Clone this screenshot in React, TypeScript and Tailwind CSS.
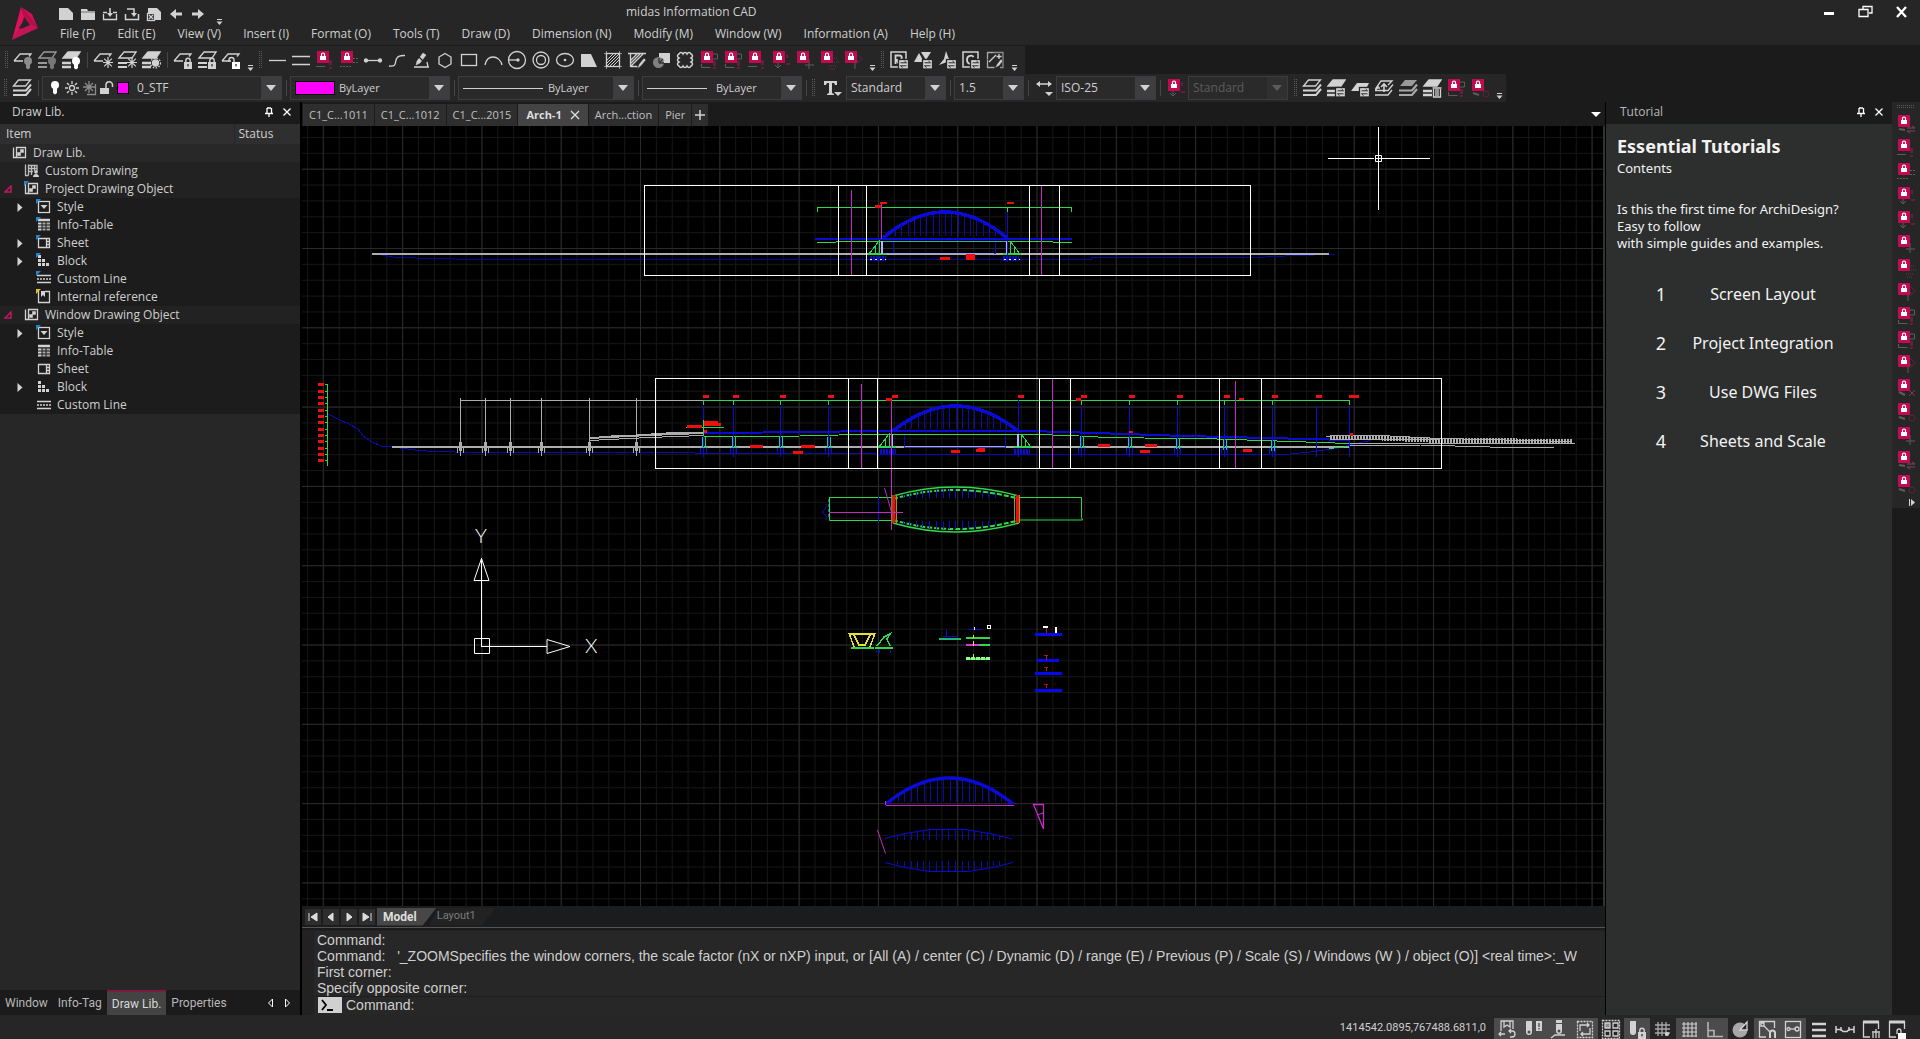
import React from 'react';

type IconProps = { children: React.ReactNode; size?: number };

const LIGHT = '#d2d2d2';

const Icon = ({ children, size = 20 }: IconProps) => (
  <svg width={size} height={size} viewBox={`0 0 ${size} ${size}`} fill="none" stroke={LIGHT} strokeWidth="1.3" className="shrink-0">
    {children}
  </svg>
);

const PadLock = ({ x = 12, y = 10, open = false }: { x?: number; y?: number; open?: boolean }) => (
  <g transform={`translate(${x} ${y})`}>
    <rect x="0" y="4" width="8" height="7" fill={open ? '#ffffff' : LIGHT} stroke="none" />
    <path d={open ? 'M2 4V2a2.300 2.300 0 0 0-5 0v2' : 'M1.8 4V2.4a2.2 2.2 0 0 1 4.4 0V4'} strokeWidth="1.4" />
    <rect x="3.4" y="6" width="1.2" height="2.4" fill="#262626" stroke="none" />
  </g>
);

const Bulb = ({ x = 11, y = 7, color = LIGHT }: { x?: number; y?: number; color?: string }) => (
  <g transform={`translate(${x} ${y})`} fill={color} stroke="none">
    <circle cx="4" cy="4" r="4" />
    <path d="M2 6h4v5l-2 1.5L2 11z" />
  </g>
);

const Snow = ({ x = 10, y = 7 }: { x?: number; y?: number }) => (
  <path transform={`translate(${x} ${y})`} d="M5 0v11M0 5.5h10M1.2 1.7l7.6 7.6M8.8 1.7L1.2 9.3" strokeWidth="1.2" />
);

const Swap = () => (
  <g>
    <rect x="9.500" y="9.500" width="10" height="9.500" fill={LIGHT} stroke="#262626" />
    <path d="M11.500 12.800h6l-2-1.800M17.500 15.800h-6l2 1.800" stroke="#262626" strokeWidth="1" />
  </g>
);

const onePlane = <path d="M1 11L7 4h11l-2 2.500M1 11h9" />;
const twoPlanes = (
  <>
    <path d="M2 8l5-6h12l-4 6z" />
    <path d="M1 13h9M1 17h9" strokeWidth="2" />
  </>
);
const solidPlanes = (
  <>
    <path d="M2 8l5-6h12l-4 6z" fill={LIGHT} />
    <path d="M1 13h9M1 17h9" strokeWidth="2.4" />
  </>
);

const layerStack = (
  <>
    <path d="M1.500 8l5-6h12l-5 6z" />
    <path d="M1 12.500h13l5-6M1 17h13l5-6" strokeWidth="2" />
  </>
);

const tools: Record<string, React.ReactNode> = {
  off: <>{onePlane}<Bulb color="#8c8c8c" /></>,
  isolate: <g stroke="#9a9a9a">{twoPlanes}<Bulb color="#777777" /></g>,
  allOn: <>{solidPlanes}<Bulb color="#ffffff" /></>,
  freeze: <>{onePlane}<Snow /></>,
  freezeSome: <>{twoPlanes}<Snow /></>,
  thaw: <>{solidPlanes}<circle cx="14.500" cy="13" r="3" fill={LIGHT} /><circle cx="14.500" cy="13" r="5" strokeDasharray="1.5 1.5" /></>,
  lock: <>{onePlane}<PadLock x={11} y={8} /></>,
  lockSome: <>{twoPlanes}<PadLock x={11} y={8} /></>,
  unlock: <>{onePlane}<PadLock x={11} y={8} open /></>,
  line: <path d="M2 10.500h17" />,
  dline: <path d="M1 6.500h18M1 14.500h18" />,
  node: <><path d="M3 10.500h14" /><circle cx="3" cy="10.500" r="1.500" fill={LIGHT} /><circle cx="17" cy="10.500" r="1.500" fill={LIGHT} /></>,
  curve: <path d="M2 16c9 1 5-4 8-8 2-3 5-2.500 8-2.500" />,
  sketch: <><path d="M3 17h15M16 12l1 5" /><path d="M5 15l1-4 6-8 3 2-6 8z" fill={LIGHT} strokeWidth="0.5" /><path d="M7 6l7 7" stroke="#262626" /></>,
  hexagon: <path d="M10 3.500l6 3.500v7l-6 3.500L4 14V7z" />,
  rect: <rect x="2.500" y="4.500" width="15" height="11" />,
  arc: <path d="M2 15c1-5 4-8 8-8s8 3 9 8" />,
  circle: <><circle cx="10" cy="10" r="8.500" /><path d="M2 10h10" /><circle cx="11" cy="10" r="1" fill={LIGHT} /></>,
  donut: <><circle cx="10" cy="10" r="8" /><circle cx="10" cy="10" r="4.500" /></>,
  ellipse: <><ellipse cx="10" cy="10" rx="8.500" ry="6.500" /><circle cx="10" cy="10" r="0.700" fill={LIGHT} /></>,
  solid: <path d="M2 4h10l6 13H2z" fill={LIGHT} stroke="none" />,
  hatch: <><rect x="3.500" y="3.500" width="13" height="13" /><path d="M4 10l6-6M4 16L16 4M10 16l6-6M4 13l9-9M7 16l9-9" strokeWidth="1" /><path d="M1 3.500h18M1 16.500h18M3.500 1v18M16.500 1v18" strokeWidth="0.600" /></>,
  hatchEdit: <><path d="M3.500 17V3.500h14M1 3.500h18M4 10l6-6M4 16L16 4M4 13l9-9M3.500 16.500h7" /><path d="M10 19l2-5 5-6 2 2-5 6z" fill={LIGHT} stroke="#262626" strokeWidth="0.600" /></>,
  wipe: <><rect x="8" y="3" width="11" height="10" fill={LIGHT} stroke="none" /><circle cx="7.500" cy="12.500" r="5.500" fill="#808080" stroke="none" /><path d="M8 13V8M8 13h5M9 12l3-3" stroke="#333333" /></>,
  cloud: <path d="M4 4c1-2 3-2 4 0 1-2 3-2 4 0 1-2 3-2 4 0 2 1 2 3 0 4 2 1 2 3 0 4 2 1 2 3 0 4-1 2-3 2-4 0-1 2-3 2-4 0-1 2-3 2-4 0-2-1-2-3 0-4-2-1-2-3 0-4-2-1-2-3 0-4z" strokeWidth="1.500" />,
  redraw: <><path d="M2 2h15v15H2z" strokeWidth="1.500" /><path d="M6.500 14V5.500h4a2 2 0 0 1 0 4.500H7l3 4" strokeWidth="1.800" /><Swap /></>,
  flipTri: <><path d="M1 12l5-9 5 9z" fill={LIGHT} stroke="none" /><path d="M8 2h10l-5 8z" fill={LIGHT} stroke="none" /><Swap /></>,
  spin: <><path d="M9 1l2.500 7L19 15l-9-3-8 3 5-6z" fill={LIGHT} stroke="none" /><Swap /></>,
  copySwap: <><path d="M2 2h15v15H2z" strokeWidth="1.500" /><path d="M12.500 7c-1-2-6.500-2-6.500 2.500S9 14 11 13" strokeWidth="1.800" /><Swap /></>,
  magic: <><path d="M8 2.500h10v15h-3" stroke="#8c8c8c" /><path d="M2.500 9.500v8h7M2.500 9V2.500H8" stroke="#a8a8a8" /><path d="M4 12l7-7M14 4v5M11.500 6.500h5" /><path d="M10 18l2-4 4-5 2 2-4 5z" fill={LIGHT} stroke="#262626" strokeWidth="0.600" /></>,
  layers: layerStack,
  layersSwap: <>{solidPlanes}<Swap /></>,
  planeSwap: <><path d="M1 13l6-8h12l-2 4h-7v4z" fill={LIGHT} stroke="none" /><Swap /></>,
  layersUp: <><path d="M1.500 12l3-4M14 7l4-4H7L2 10h4M1 12.500h13l5-6M1 17h13l4-5" /><path d="M10 14V6M7 9l3-3 3 3" strokeWidth="1.600" /></>,
  layersDim: <><path d="M2 8l5-6h12l-5 6z" fill="#9a9a9a" stroke="none" /><path d="M1 12.500h13l5-6M1 17h13l5-6" strokeWidth="2.200" stroke="#a8a8a8" /></>,
  layersTrash: <>{solidPlanes}<path d="M10.500 10h9M11.500 11v8h7v-8M14 11v7M16 11v7" /></>,
};

const ghosts: Record<string, React.ReactNode> = {
  dash: <><path d="M1 16.500h12M14 8.500h5M14 12.500h5" stroke="#5c5c5c" strokeDasharray="2 1" /></>,
  box: <><path d="M2.500 14v3.500h9" stroke="#5c5c5c" /><path d="M14 4h4.500v5H14" stroke="#5c5c5c" /><path d="M15.500 11v5M15.500 17v2" stroke="#62203f" strokeWidth="3" /></>,
  alert: <><path d="M1 16.500h9" stroke="#5c5c5c" /><path d="M15.500 10v5M15.500 17v2" stroke="#62203f" strokeWidth="3" /></>,
  arrow: <><path d="M7 13v5M4 15l3 3 3-3" stroke="#5c5c5c" /><path d="M16 4v4M15 14h4" stroke="#62203f" strokeWidth="2" /></>,
  plus: <path d="M14 9v10M10 15h9" stroke="#5c5c5c" />,
  dots: <path d="M13 8h6M13 12h7M10 16h8M11 19h6" stroke="#6a3350" strokeDasharray="1 1" />,
  rotate: <><path d="M12 19v-8h3" stroke="#5c5c5c" /><path d="M15 5l4 4-5 5" stroke="#62203f" /></>,
  cross: <><path d="M3 14l6 3" stroke="#5c5c5c" strokeWidth="2" /><path d="M13 12l6 6M19 12l-6 6" stroke="#7c3c5c" /></>,
  swap: <><path d="M3 15l6 1" stroke="#5c5c5c" strokeWidth="2" /><path d="M11 14h8l-3-2M19 17h-8l3 2" stroke="#7c4460" /></>,
  round: <><path d="M3 15l6 2" stroke="#5c5c5c" strokeWidth="2" /><circle cx="16" cy="16" r="3" stroke="#62203f" /></>,
};

const LockedIcon = ({ ghost }: { ghost: string }) => (
  <svg width="20" height="20" viewBox="0 0 20 20" fill="none" className="shrink-0">
    {ghosts[ghost]}
    <rect x="2" y="1" width="12" height="12" fill="#c00b50" />
    <rect x="5" y="6" width="6" height="4" fill="#ffffff" />
    <path d="M6.500 6V4.500a1.500 1.500 0 0 1 3 0V6" stroke="#ffffff" strokeWidth="1.200" />
  </svg>
);

const ToolButton = ({ name }: { name: string }) => (
  <button aria-label={name} className="flex h-6 w-6 shrink-0 items-center justify-center hover:bg-[#3a3a3a]">
    {name.startsWith('locked-') ? <LockedIcon ghost={name.slice(7)} /> : <Icon>{tools[name]}</Icon>}
  </button>
);

const Grip = () => (
  <span className="flex w-2 shrink-0 justify-center">
    <svg width="4" height="18" viewBox="0 0 4 18">
      <path d="M0.500 0v18M2.500 0v18" stroke="#5a5a5a" strokeDasharray="1 1" />
    </svg>
  </span>
);

const Separator = () => (
  <span className="flex w-2 shrink-0 justify-center">
    <span className="h-4 w-px bg-[#454545]" />
  </span>
);

const MoreButton = () => (
  <button aria-label="More tools" className="flex h-6 w-3.5 shrink-0 items-end justify-center">
    <svg width="7" height="7" viewBox="0 0 7 7">
      <path d="M1 0.500h5" stroke={LIGHT} />
      <path d="M0.500 2.500h6L3.500 6z" fill={LIGHT} />
    </svg>
  </button>
);

type ComboProps = {
  label: string;
  value: string;
  width: string;
  text: string;
  disabled?: boolean;
  children?: React.ReactNode;
};

const Combo = ({ label, value, width, text, disabled, children }: ComboProps) => (
  <div className={`relative flex h-6 shrink-0 items-center border border-[#3c3c3e] bg-[#2a2a2b] ${width}`}>
    {children && <div className="pointer-events-none absolute inset-y-0 left-0 flex items-center">{children}</div>}
    <select
      aria-label={label}
      disabled={disabled}
      className={`h-full w-full appearance-none bg-transparent outline-none ${text} ${disabled ? 'text-[#5c5c5c]' : 'text-[#cfcfcf]'}`}
    >
      <option>{value}</option>
    </select>
    <span className={`pointer-events-none absolute inset-y-0 right-0 flex w-5 items-center justify-center ${disabled ? 'bg-[#303031]' : 'bg-[#3e3e41]'}`}>
      <svg width="10" height="6" viewBox="0 0 10 6">
        <path d="M0 0h10L5 6z" fill={disabled ? '#5c5c5c' : LIGHT} />
      </svg>
    </span>
  </div>
);

const menus = ['File (F)', 'Edit (E)', 'View (V)', 'Insert (I)', 'Format (O)', 'Tools (T)', 'Draw (D)', 'Dimension (N)', 'Modify (M)', 'Window (W)', 'Information (A)', 'Help (H)'];

const quickAccess: { label: string; art: React.ReactNode }[] = [
  { label: 'New', art: <path d="M1 2h9l5 5v7H1z" fill={LIGHT} stroke="none" /> },
  { label: 'Open', art: <><path d="M1 3h6l1 2h7v9H1z" fill={LIGHT} stroke="none" /><path d="M1 6h14" stroke="#888888" /></> },
  { label: 'Save', art: <><path d="M1.500 8v5.500h13V8M5 6.500H1M15 6.500h-4" /><path d="M8 2v6" strokeWidth="1.600" /><path d="M5 7h6l-3 4z" fill={LIGHT} stroke="none" /></> },
  { label: 'Save as', art: <><path d="M1.500 8v5.500h13V8M3 3h7v6" strokeWidth="1.500" /><path d="M7 7h6l-3 4z" fill={LIGHT} stroke="none" /></> },
  { label: 'Close', art: <><path d="M2 2h9l4 4v8H2z" fill={LIGHT} stroke="none" /><rect x="1.500" y="7.500" width="7" height="7" fill="#262626" /><path d="M3 9l4 4M7 9l-4 4" /></> },
  { label: 'Undo', art: <path d="M2 8l6-5v3.500h6v3H8V13z" fill={LIGHT} stroke="none" /> },
  { label: 'Redo', art: <path d="M14 8L8 3v3.500H2v3h6V13z" fill={LIGHT} stroke="none" /> },
];

const Header = () => (
  <header className="flex h-[45px] shrink-0 bg-[#262626]">
    <svg width="28" height="36" viewBox="0 0 28 36" className="mt-1 ml-3 shrink-0">
      <path d="M9 3L13 14 7 24 9 30 0 36z" fill="#e0105a" />
      <path d="M9 3L26 24 19 27 12 13z" fill="#b80e49" />
      <path d="M9 3L20 10 26 24z" fill="#cc1152" />
      <path d="M0 36L26 24 18 20 7 25z" fill="#c51358" />
      <path d="M12 13l6 8-9 4z" fill="#262626" />
    </svg>
    <div className="ml-[18px] flex flex-col">
      <div className="flex h-6 items-center pt-1">
        {quickAccess.map((item) => (
          <button key={item.label} aria-label={item.label} className="mr-1.5 flex h-4 w-4 items-center justify-center">
            <Icon size={16}>{item.art}</Icon>
          </button>
        ))}
        <MoreButton />
        <h1 className="-mt-1 ml-[400px] text-xs whitespace-nowrap text-[#cfcfcf]">midas Information CAD</h1>
      </div>
      <nav className="flex h-5 items-center gap-[22px] pl-0.5 text-xs text-[#cfcfcf]">
        {menus.map((menu) => (
          <button key={menu} className="whitespace-nowrap">{menu}</button>
        ))}
      </nav>
    </div>
    <div className="ml-auto flex items-start gap-5 pt-1 pr-[11px] text-white">
      <button aria-label="Minimize"><Icon size={16}><path d="M3 9.500h10" stroke="#fff" strokeWidth="3" /></Icon></button>
      <button aria-label="Restore"><Icon size={16}><path d="M6 5V2.500h9V9H12M2 5.500h9v7H2z" stroke="#fff" /></Icon></button>
      <button aria-label="Close"><Icon size={16}><path d="M4 3l9 10M13 3L4 13" stroke="#fff" strokeWidth="2.300" /></Icon></button>
    </div>
  </header>
);

const drawTools = ['line', 'dline', 'locked-alert', 'locked-dash', 'node', 'curve', 'sketch', 'hexagon', 'rect', 'arc', 'circle', 'donut', 'ellipse', 'solid', 'hatch', 'hatchEdit', 'wipe', 'cloud', 'locked-box', 'locked-box', 'locked-alert', 'locked-arrow', 'locked-plus', 'locked-dots', 'locked-rotate'];

const Toolbars = () => (
  <div className="shrink-0 bg-[#1b1b1b]">
    <div className="flex h-[29px] w-fit items-center border-t border-[#1b1b1b] bg-[#262626] pl-[3px] pr-1">
      <Grip />
      {['off', 'isolate', 'allOn'].map((t) => <ToolButton key={t} name={t} />)}
      <Separator />
      {['freeze', 'freezeSome', 'thaw'].map((t) => <ToolButton key={t} name={t} />)}
      <Separator />
      {['lock', 'lockSome', 'unlock'].map((t) => <ToolButton key={t} name={t} />)}
      <MoreButton />
      <Grip />
      {drawTools.map((t, i) => <ToolButton key={i} name={t} />)}
      <MoreButton />
      <Grip />
      {['redraw', 'flipTri', 'spin', 'copySwap', 'magic'].map((t) => <ToolButton key={t} name={t} />)}
      <MoreButton />
    </div>
    <div className="flex h-7 w-fit items-center bg-[#262626] pl-0.5">
      <Grip />
      <ToolButton name="layers" />
      <Separator />
      <Combo label="Layer" value="0_STF" width="w-60" text="pl-[94px] text-xs">
        <div className="flex items-center gap-px pl-1">
          <Icon size={16}><g transform="translate(4 1)"><circle cx="4" cy="4" r="4" fill="#fff" stroke="none" /><path d="M2 6h4v6l-2 1.500L2 12z" fill="#fff" stroke="none" /></g></Icon>
          <Icon size={16}><circle cx="8" cy="8" r="2.500" /><path d="M8 1v3M8 12v3M1 8h3M12 8h3M3 3l2 2M11 11l2 2M13 3l-2 2M5 11l-2 2" /></Icon>
          <Icon size={16}><path d="M8 1v12M2 7h12M4 3l8 8M12 3l-8 8" stroke="#8c8c8c" /><path d="M6 14.500h8.500V4" stroke="#8c8c8c" /></Icon>
          <Icon size={16}><path d="M2 8h9v6H2z" fill={LIGHT} stroke="none" /><path d="M8 8V5a3 3 0 0 1 6.500 0v2" strokeWidth="1.500" /></Icon>
          <span className="ml-0.5 h-3 w-3 border border-black bg-[#ff00ff]" />
        </div>
      </Combo>
      <Separator />
      <Combo label="Color" value="ByLayer" width="w-40" text="pl-12 text-[11px]">
        <span className="ml-1 h-3.5 w-10 border border-black bg-[#ff00ff]" />
      </Combo>
      <Separator />
      <Combo label="Line type" value="ByLayer" width="w-44" text="pl-[89px] text-[11px]">
        <span className="ml-1 h-px w-20 bg-[#cfcfcf]" />
      </Combo>
      <Separator />
      <Combo label="Line weight" value="ByLayer" width="w-40" text="pl-[73px] text-[11px]">
        <span className="ml-1 h-px w-[60px] bg-[#cfcfcf]" />
      </Combo>
      <Separator />
      <Grip />
      <button aria-label="Text style" className="flex h-6 w-7 items-center justify-center">
        <Icon>
          <path d="M2 3h13v4h-2l-1-2h-2v10l2 1v1H5v-1l2-1V5H5L4 7H2z" fill={LIGHT} stroke="none" />
          <path d="M12 14h8l-4 4z" fill={LIGHT} stroke="none" />
        </Icon>
      </button>
      <Combo label="Text style name" value="Standard" width="w-[100px]" text="pl-1 text-xs" />
      <Separator />
      <Combo label="Text height" value="1.5" width="w-[70px]" text="pl-1 text-xs" />
      <Separator />
      <button aria-label="Dimension style" className="flex h-6 w-6 items-center justify-center">
        <Icon>
          <path d="M3 6h14" strokeWidth="1.500" />
          <path d="M2 6l4-3v6zM18 6l-4-3v6zM11 14h8l-4 4z" fill={LIGHT} stroke="none" />
        </Icon>
      </button>
      <Combo label="Dimension style name" value="ISO-25" width="w-[100px]" text="pl-1 text-xs" />
      <Separator />
      <ToolButton name="locked-arrow" />
      <Combo label="Table style" value="Standard" width="w-[100px]" text="pl-1 text-xs" disabled />
      <span className="w-1" />
      <Grip />
      {['layers', 'layersSwap', 'planeSwap', 'layersUp', 'layersDim', 'layersTrash', 'locked-box', 'locked-round'].map((t) => (
        <ToolButton key={t} name={t} />
      ))}
      <MoreButton />
    </div>
  </div>
);

const PinClose = () => (
  <div className="ml-auto flex items-center gap-2 pr-2">
    <button aria-label="Pin"><Icon size={10}><path d="M3 1v5M7.500 1v5M3 1h4M1 6.500h8M5 6.500V10" stroke="#fff" /></Icon></button>
    <button aria-label="Close panel"><Icon size={10}><path d="M1.500 1.500l7 7M8.500 1.500l-7 7" stroke="#fff" /></Icon></button>
  </div>
);

const treeArt: Record<string, React.ReactNode> = {
  lib: <><path d="M1.500 2.500v10h3v-10h9v10h-12" /><path d="M6 10l2-2M9 7l2-2M6 8h2v2H6zM9 5h2v2H9z" strokeWidth="1.600" /></>,
  custom: <><path d="M1.500 1.500v11h3M4.500 1.500v11M4 2.500h9v6M4 5.500h9M4 8.500h5M7.500 2v10M10.500 2v6" stroke="#bdbdbd" /><circle cx="12" cy="9" r="1.800" fill={LIGHT} stroke="none" /><path d="M9 14c0-4 6-4 6 0z" fill={LIGHT} stroke="none" /></>,
  style: <><rect x="2.500" y="2.500" width="11" height="11" /><path d="M4.500 6h7L8 10z" fill={LIGHT} stroke="none" /></>,
  table: <><path d="M2 3h12" strokeWidth="2.500" /><path d="M2 6.500h3.500M2 9.500h3.500M2 12.500h3.500" strokeWidth="2" /><path d="M6.500 6.500h3M10.500 6.500h3.500M6.500 9.500h3M10.500 9.500h3.500M6.500 12.500h3M10.500 12.500h3.500" strokeWidth="2" stroke="#a8a8a8" /></>,
  sheet: <path d="M2.500 3.500h11v9h-11zM10.500 3.500v9M10.500 6.500h3M10.500 9.500h3" />,
  block: <path d="M2 2h3v3H2zM2 6h3v3H2zM2 10h3v3H2zM6 6h3v3H6zM6 10h3v3H6zM10 10h3v3h-3z" fill={LIGHT} stroke="none" />,
  lines: <><path d="M1 4.500h14M1 11.500h14" /><path d="M1 8h14" strokeDasharray="2 1" /></>,
  ref: <><path d="M2.500 2v11.500h11v-11H9" /><path d="M5 2h4v6L7 6 5 8z" fill={LIGHT} stroke="none" /></>,
};

type TreeRow = { level: 0 | 1 | 2; icon: string; label: string; arrow?: 'open' | 'closed'; mark?: 'blue' | 'yellow' };

const rows: TreeRow[] = [
  { level: 0, icon: 'lib', label: 'Draw Lib.' },
  { level: 1, icon: 'custom', label: 'Custom Drawing' },
  { level: 1, icon: 'lib', label: 'Project Drawing Object', arrow: 'open', mark: 'blue' },
  { level: 2, icon: 'style', label: 'Style', arrow: 'closed', mark: 'blue' },
  { level: 2, icon: 'table', label: 'Info-Table', mark: 'blue' },
  { level: 2, icon: 'sheet', label: 'Sheet', arrow: 'closed', mark: 'blue' },
  { level: 2, icon: 'block', label: 'Block', arrow: 'closed', mark: 'blue' },
  { level: 2, icon: 'lines', label: 'Custom Line', mark: 'blue' },
  { level: 2, icon: 'ref', label: 'Internal reference', mark: 'yellow' },
  { level: 1, icon: 'lib', label: 'Window Drawing Object', arrow: 'open' },
  { level: 2, icon: 'style', label: 'Style', arrow: 'closed', mark: 'blue' },
  { level: 2, icon: 'table', label: 'Info-Table' },
  { level: 2, icon: 'sheet', label: 'Sheet' },
  { level: 2, icon: 'block', label: 'Block', arrow: 'closed' },
  { level: 2, icon: 'lines', label: 'Custom Line' },
];

const levelPad = { 0: 'pl-0', 1: 'pl-0', 2: 'pl-3' };
const levelBg = { 0: 'bg-[#282828]', 1: 'bg-[#222222]', 2: 'bg-[#1c1c1c]' };

const LibraryPanel = () => (
  <aside className="flex w-[300px] shrink-0 flex-col bg-[#272727]">
    <div className="flex h-[22px] shrink-0 items-center bg-[#1b1b1b] pb-0.5 pl-3 text-xs text-[#cfcfcf]">
      <h2>Draw Lib.</h2>
      <PinClose />
    </div>
    <table className="w-full table-fixed border-collapse text-left text-xs text-[#cfcfcf]">
      <thead>
        <tr className="h-5 bg-[#2f2f2f]">
          <th className="p-0 pl-1.5 font-normal">Item</th>
          <th className="w-[66px] border-l border-[#272727] p-0 pl-1 font-normal">Status</th>
        </tr>
      </thead>
      <tbody>
        {rows.map((row, i) => (
          <tr key={i} className={`h-[18px] ${levelBg[row.level]}`}>
            <td className="p-0" colSpan={2}>
              <div className={`flex h-[18px] items-center ${levelPad[row.level]}`}>
                <span className={`flex shrink-0 justify-center ${row.level === 0 ? 'w-3' : 'w-4'}`}>
                  {row.arrow === 'closed' && <svg width="6" height="9" viewBox="0 0 6 9"><path d="M0.500 0l5 4.500-5 4.500z" fill={LIGHT} /></svg>}
                  {row.arrow === 'open' && <svg width="8" height="8" viewBox="0 0 8 8"><path d="M7 1v6H1z" fill="none" stroke="#c2185b" strokeWidth="1.500" /></svg>}
                </span>
                <span className={`relative h-4 w-4 shrink-0 ${row.level === 0 ? '' : 'ml-2'}`}>
                  <Icon size={16}>
                    {treeArt[row.icon]}
                    {row.mark && <path d="M0 0h5L0 5z" fill={row.mark === 'blue' ? '#1f86d6' : '#e0c020'} stroke="none" />}
                  </Icon>
                </span>
                <span className="pl-[5px]">{row.label}</span>
              </div>
            </td>
          </tr>
        ))}
      </tbody>
    </table>
    <div className="mt-auto flex h-[25px] shrink-0 items-stretch bg-[#1b1b1b] font-['Roboto',sans-serif] text-xs text-[#b8b8b8]">
      <button className="px-[5px]">Window</button>
      <button className="px-[5px]">Info-Tag</button>
      <button className="border-t-2 border-[#7d1a44] bg-[#434343] px-[5px] text-[#d8d8d8]">Draw Lib.</button>
      <button className="px-[5px]">Properties</button>
      <button aria-label="Previous panel" className="ml-auto px-[5px]"><svg width="7" height="10" viewBox="0 0 7 10"><path d="M5.500 1v8L1.500 5z" fill="none" stroke="#fff" /></svg></button>
      <button aria-label="Next panel" className="mr-1 px-[5px]"><svg width="7" height="10" viewBox="0 0 7 10"><path d="M1.500 1v8l4-4z" fill="none" stroke="#fff" /></svg></button>
    </div>
  </aside>
);

const tabs = ['C1_C...1011', 'C1_C...1012', 'C1_C...2015', 'Arch-1', 'Arch...ction', 'Pier'];

const DrawingTabs = () => (
  <div className="flex h-6 shrink-0 items-stretch gap-px bg-[#1b1b1b] pt-0.5 pl-px text-[11px] text-[#c0c0c0]">
    {tabs.map((tab) =>
      tab === 'Arch-1' ? (
        <div key={tab} className="flex items-center gap-2 bg-[#444444] px-2 font-bold text-[#dedede]">
          <button>{tab}</button>
          <button aria-label="Close tab"><Icon size={10}><path d="M1 1l8 8M9 1l-8 8" stroke="#e0e0e0" /></Icon></button>
        </div>
      ) : (
        <button key={tab} className="bg-[#2e2e2e] px-1.5 whitespace-nowrap">{tab}</button>
      )
    )}
    <button aria-label="New tab" className="bg-[#2e2e2e] px-0.5"><Icon size={12}><path d="M6 1v10M1 6h10" strokeWidth="1.500" /></Icon></button>
    <button aria-label="Tab list" className="mr-1 ml-auto"><svg width="10" height="6" viewBox="0 0 10 6"><path d="M0 0h10L5 5z" fill="#fff" /></svg></button>
  </div>
);

const GREEN = '#2fd84a';
const BLUE = '#0b0bd8';
const RED = '#ee1010';
const MAGENTA = '#c22ac2';
const GRAY = '#adadad';

type ArchProps = { x1: number; x2: number; base: number; top: number };

const Arch = ({ x1, x2, base, top }: ArchProps) => {
  const mid = (x1 + x2) / 2;
  const half = (x2 - x1) / 2;
  const yAt = (x: number) => base - (base - top) * (1 - Math.pow((x - mid) / half, 2));
  const points = Array.from({ length: 33 }, (_, i) => x1 + ((x2 - x1) * i) / 32);
  const hangers = Array.from({ length: 17 }, (_, i) => Math.round(x1 + 12 + ((x2 - x1 - 24) * i) / 16) + 0.5);
  return (
    <g stroke={BLUE} fill="none">
      <polyline points={points.map((x) => `${x},${yAt(x)}`).join(' ')} strokeWidth="3.500" />
      <path d={hangers.map((x) => `M${x} ${yAt(x)}V${base - 2}`).join('')} opacity="0.800" />
    </g>
  );
};

const Abutments = ({ left, right, y }: { left: number; right: number; y: number }) => (
  <g fill="none" stroke={GREEN}>
    <path d={`M${left - 13} ${y + 13}L${left - 3} ${y}V${y + 13}M${left - 7} ${y + 5}V${y + 13}M${right + 13} ${y + 13}L${right + 3} ${y}V${y + 13}M${right + 7} ${y + 5}V${y + 13}`} />
    <path d={`M${left - 14} ${y + 13}h18M${right - 4} ${y + 13}h18`} strokeWidth="2" />
    <path d={`M${left} ${y}v13M${right} ${y}v13`} stroke="#b4b4ff" strokeWidth="2" />
    <path d={`M${left - 12} ${y + 17}h16M${right - 4} ${y + 17}h16`} stroke={BLUE} strokeWidth="5" strokeDasharray="2 1" />
  </g>
);

const piers = [703.5, 733.5, 780.5, 828.5, 1081.5, 1129.5, 1177.5, 1224.5, 1272.5, 1316.5, 1349.5];
const approach = [460.5, 485.5, 510.5, 541.5, 589.5, 636.5];
const topMarks = [703, 733, 780, 828, 892, 1018, 1081, 1129, 1177, 1224, 1272, 1316, 1349];
const redNotes = [[750, 445, 13], [801, 445, 14], [793, 451, 10], [951, 450, 9], [976, 449, 8], [1098, 444, 12], [1145, 444, 12], [1140, 450, 10], [1243, 449, 9]];
const gauge = [383, 390, 396, 402, 409, 415, 421, 428, 434, 440, 447, 453, 459];

const UpperElevation = () => (
  <g fill="none" shapeRendering="crispEdges">
    <path d="M380 254.500l15 3 80 2h616v-2h164l40-2 40-1" stroke="#06069c" />
    <path d="M372 254h957" stroke={GRAY} strokeWidth="2" />
    <Arch x1={883} x2={1007} base={238} top={212} />
    <path d="M815 238.500h257" stroke={BLUE} strokeWidth="2" />
    <path d="M893.500 241v12.500h102V241" stroke={BLUE} opacity="0.800" />
    <path d="M817 212v-4.500h254.500v4.500M881.500 208v5M1007.500 208v5M817 242.500h6l38-1.500h168l36 1.500h7" stroke={GREEN} />
    <path d="M884 241.500h122" stroke="#20b4b4" />
    <path d="M884 253.500h110" stroke="#9c9cff" />
    <Abutments left={882} right={1007} y={241} />
    <path d="M1007.500 212v50" stroke={BLUE} />
    <path d="M870 259.500h16M1004 259.500h16" stroke="#ffffff" strokeDasharray="2 3" />
    <path d="M881.500 204v35M851.500 190v85.500M1041.500 186v90" stroke={MAGENTA} />
    <path d="M644.500 185.500h606v90h-606zM838.500 185.500v90M866.500 185.500v90M1029.500 185.500v90M1059.500 185.500v90" stroke="#ffffff" />
    <path d="M880 202h7v2h-7zM875 205h6v3h-6zM1007 202h7v2h-7zM940 257h10v3h-10zM966 254h9v6h-9z" fill={RED} />
  </g>
);

const LowerElevation = () => (
  <g fill="none" shapeRendering="crispEdges">
    <path d="M328 414l12 6 9 4 9 5 5 7 9 6 10 4.500 11 .5 22 3 17 1.500 45 1h180l75 1h143v1h410l30-3 20-3 35-8" stroke="#0909b8" />
    <path d="M392 447h958" stroke={GRAY} strokeWidth="2" />
    <g stroke={GRAY}>
      <path d="M460.500 400.500H703M589 438l22-2 25-1 30-2 37-1M589 440.500l60-3 54-2" />
      <path d="M589 438l60-3 54-2" strokeWidth="2" />
      {approach.map((x) => (
        <path key={x} d={`M${x} 398v58M${x - 1} 442v9M${x + 1} 442v9M${x - 3} 447v6M${x + 3} 447v6M${x - 3} 447.500h7`} />
      ))}
    </g>
    <Arch x1={893} x2={1018} base={431} top={406} />
    <path d="M703 433.500l60-1 117-1.500h150l50 1.500 105 3.500 164 4" stroke={BLUE} strokeWidth="2" />
    <path d="M904.500 434v13h101v-13" stroke={BLUE} opacity="0.800" />
    <path d="M703 405v-4.500h646.500v4.500M703 436.500h77l98-2.500h140l52 1.500 37 2 110 1.500 60 2 72 2.500v3l-20 2" stroke={GREEN} />
    {piers.map((x, i) => (
      <g key={x}>
        <path d={`M${x} 406V457`} stroke={BLUE} />
        {i < 9 && (
          <>
            <path d={`M${x} 401v4M${x - 1} ${i < 4 ? 437 : 436 + (i - 4)}v11M${x + 2} ${i < 4 ? 437 : 436 + (i - 4)}v11M${x - 3} 447.500h7`} stroke="#26c987" />
            <path d={`M${x} 448v7M${x - 3} 448v6M${x + 3} 448v6`} stroke={BLUE} />
          </>
        )}
      </g>
    ))}
    <path d="M1018.500 400v57" stroke={BLUE} />
    <Abutments left={892} right={1018} y={434} />
    <path d="M1326 437l8-2h36l70 3.500 130 3M1330 439.500h110" stroke={GRAY} />
    <path d="M1330 437.500h40l70 3h20l112 1" stroke={GRAY} strokeWidth="5" strokeDasharray="2 1" />
    <path d="M1350 443.500h225M1350 445h70l70 2h64" stroke={GRAY} />
    <path d="M861.500 384v85M1052.500 379v90M1235.500 381v88M891.500 398v132" stroke={MAGENTA} />
    <path d="M655.500 378.500h785.500v90H655.500zM848.500 378.500v90M877.500 378.500v90M1039.500 378.500v90M1070.500 378.500v90M1219.500 378.500v90M1261.500 378.500v90" stroke="#ffffff" />
    <path d="M686 427.500h38M703.500 420v16" stroke={GREEN} />
    <g fill={RED}>
      {topMarks.map((x) => <rect key={x} x={x} y="395" width={x === 1349 ? 10 : 6} height="3" />)}
      {redNotes.map(([x, y, w]) => <rect key={`${x}-${y}`} x={x} y={y} width={w} height="3" />)}
      {gauge.map((y) => <rect key={y} x="318" y={y} width="6" height="3" />)}
      <path d="M687 425h15v3h-15zM704 421h14v2h3v3h-17zM704 430h3v3h-3zM886 398h6v3h-6zM1076 398h5v3h-5zM1239 398h5v2h-5zM1350 433h3v3h-3zM978 448h7v4h-7zM1129 431h4v2h-4z" />
    </g>
    <path d={`M327.500 384v82${gauge.map((y) => `M325 ${y + 1.5}h3`).join('')}`} stroke={GREEN} />
  </g>
);

const PlanView = () => (
  <g fill="none">
    <path d="M829.500 497.500H892M829.500 497v23.500H892M1019 497.500h62.500v20l1 2.500H1019" stroke={GREEN} />
    <path d="M829 499v20" stroke="#3ad0c0" strokeDasharray="3 2" />
    <path d="M893 496Q955 478 1019 496M893 523Q955 541 1019 523" stroke={GREEN} strokeWidth="1.500" />
    <path d="M893 499Q955 481 1019 499M893 520Q955 538 1019 520" stroke={GREEN} strokeWidth="2" strokeDasharray="5 2" />
    <path d="M903.500 495v3M909.500 494v4M916.500 493v5M922.500 491v7M929.500 490v8M936.500 490v8M943.500 489v9M949.500 489v9M955.500 489v9M962.500 489v9M968.500 490v8M975.500 490v8M982.500 491v7M988.500 492v6M995.500 493v5M903.500 521v4M909.500 521v4M916.500 521v5M922.500 521v6M929.500 521v7M936.500 521v8M943.500 521v8M949.500 521v8M955.500 521v8M962.500 521v8M968.500 521v8M975.500 521v7M982.500 521v6M988.500 521v5M995.500 521v4M878.500 496v26M826 504v4l-4 4 4 4v4" stroke={BLUE} />
    <path d="M894 495v28M1017.500 495v28" stroke={RED} strokeWidth="3" />
    <path d="M892 495v28M1014.500 495v28M896.500 495v28M1019.500 495v28" stroke="#9a9a20" />
    <path d="M829 512.500h74M884.500 488l7 24" stroke={MAGENTA} />
  </g>
);

const Sections = () => (
  <g fill="none" shapeRendering="crispEdges">
    <path d="M849 634h26M849 633l5 14M875 633l-5 14M854 635l5 10h6l5-10" stroke="#e8e030" strokeWidth="1.500" />
    <path d="M851 648h23M875 648h18M877 646l7-9 6-3-3 5 3 7" stroke={GREEN} strokeWidth="1.500" />
    <path d="M876 651.500h6M890 651.500h3" stroke={BLUE} strokeWidth="3" strokeDasharray="1 2" />
    <path d="M939 638.500h22" stroke="#1fb870" strokeWidth="2" />
    <path d="M943 636.500h14M946.500 630v7M968 629.500h14" stroke={BLUE} />
    <path d="M987.500 625.500h3v3h-3zM974.500 627v3" stroke="#ffffff" />
    <path d="M966 638h24M966 645h24M968 658.500h20" stroke={GREEN} strokeWidth="2" />
    <path d="M966 658h24" stroke="#8cff8c" strokeWidth="3" strokeDasharray="4 1" />
    <path d="M966 645h13" stroke="#e030e0" strokeWidth="2" />
    <path d="M973.500 641v5M973.500 654v5M973.500 635v3" stroke="#e8e030" />
    <path d="M1035 634h27M1037 660.500h22M1035 673h27M1035 690h27" stroke="#0808f0" strokeWidth="3" />
    <path d="M1046 628v5M1046 655v5M1046 667v4M1046 684v4M1044 655h4M1044 667h4M1044 684h4" stroke="#b01818" />
    <path d="M1043 627h5M1056 627v6" stroke="#ffffff" strokeWidth="2" />
  </g>
);

const ArchDetail = () => (
  <g fill="none">
    <Arch x1={886} x2={1013} base={804} top={778} />
    <path d="M886 805.500h128M877.500 830l8 23.500M885.500 801v4" stroke={MAGENTA} />
    <path d="M1033.500 804.500h10v24.500zM1037 815l6-2" stroke={MAGENTA} strokeWidth="1.300" />
    <path d="M885 838.500l20-5 25-4h35l25 4 22 5.500M885 862.500l20 5 25 4h38l25-4 20-5" stroke={BLUE} />
    <path d="M897.500 835v5M904.500 834v6M911.500 832v8M917.500 831v9M923.500 831v9M929.500 830v10M936.500 830v10M942.500 829v11M948.500 829v11M955.500 829v11M962.500 829v11M968.500 830v10M974.500 831v9M981.500 832v8M987.500 833v7M993.500 834v6M999.500 835v5M897.500 861v4M904.500 861v6M911.500 861v8M917.500 861v9M923.500 861v9M929.500 861v10M936.500 861v10M942.500 861v10M948.500 861v10M955.500 861v10M962.500 861v10M968.500 861v9M974.500 861v9M981.500 861v8M987.500 861v6M993.500 861v5M999.500 861v4" stroke={BLUE} opacity="0.800" />
  </g>
);

// The drawing keeps its own origin; the viewport only shows a window onto it.
const Viewport = () => (
  <div className="min-h-0 flex-1 overflow-hidden border-r-2 border-[#333333] bg-black">
    <svg className="block h-full w-full" aria-label="Arch-1 model space">
      <defs>
        <pattern id="minor" width="15.86" height="15.86" patternUnits="userSpaceOnUse" x="322.8" y="406.6">
          <path d="M0.500 0v15.860M0 0.500h15.860" stroke="#161616" fill="none" />
        </pattern>
        <pattern id="major" width="79.3" height="79.3" patternUnits="userSpaceOnUse" x="322.8" y="406.6">
          <path d="M0.500 0v79.300M0 0.500h79.300" stroke="#2a2a2a" fill="none" />
        </pattern>
      </defs>
      <g transform="translate(-302 -126)">
        <rect x="0" y="0" width="4000" height="3000" fill="url(#minor)" />
        <rect x="0" y="0" width="4000" height="3000" fill="url(#major)" />
        <UpperElevation />
        <LowerElevation />
        <PlanView />
        <Sections />
        <ArchDetail />
        <g stroke="#ffffff" fill="none">
          <path d="M474.500 638.500h15v15h-15zM481.500 646V558M481 646.500h66M481.500 558.500l7.500 22h-15zM570 646.500l-23 7v-14z" />
          <path d="M1328 158.500h46M1382 158.500h48M1378.500 127v28M1378.500 162v48M1375.500 155.500h6v6h-6zM1378.500 156v6M1376 158.500h6" />
        </g>
        <g fill="#ffffff" fontFamily="Lato, sans-serif" fontWeight="300" fontSize="20">
          <text x="475" y="543">Y</text>
          <text x="585" y="653">X</text>
        </g>
      </g>
    </svg>
  </div>
);

const navArt = ['M3 1v8M11 1v8L5 5z', 'M9 1v8L4 5z', 'M5 1v8l5-4z', 'M11 1v8M3 1v8l6-4z'];

const LayoutTabs = () => (
  <div className="flex h-[22px] shrink-0 items-center gap-0.5 border-b border-[#555555] bg-[#1b1c1d] pl-[3px] font-['Roboto',sans-serif] text-xs">
    {navArt.map((d, i) => (
      <button key={i} aria-label={['First', 'Previous', 'Next', 'Last'][i] + ' layout'} className="flex h-4 w-4 items-center justify-center bg-[#2e2e2e]">
        <svg width="14" height="10" viewBox="0 0 14 10"><path d={d} fill="#dddddd" stroke="#dddddd" /></svg>
      </button>
    ))}
    <button className="h-4.5 bg-[#474747] pr-5 pl-1.5 font-bold text-[#dedede] [clip-path:polygon(0_0,100%_0,calc(100%-14px)_100%,0_100%)]">Model</button>
    <button className="-ml-2.5 h-4.5 bg-[#222222] pr-5 pl-2 text-[11px] text-[#7c7c7c] [clip-path:polygon(10px_0,100%_0,calc(100%-14px)_100%,0_100%)]">Layout1</button>
  </div>
);

const history = [
  'Command:',
  "Command:   '_ZOOMSpecifies the window corners, the scale factor (nX or nXP) input, or [All (A) / center (C) / Dynamic (D) / range (E) / Previous (P) / Scale (S) / Windows (W ) / object (O)] <real time>:_W",
  'First corner:',
  'Specify opposite corner:',
];

const CommandPanel = () => (
  <section className="mt-0.5 shrink-0 border-t border-l-[12px] border-[#222222] bg-[#272727] font-['Liberation_Sans',sans-serif] text-sm text-[#cfcfcf]">
    <div className="h-[65px] pt-px pl-[3px] leading-4">
      {history.map((text) => (
        <p key={text} className="whitespace-pre">{text}</p>
      ))}
    </div>
    <label className="flex h-[19px] items-center gap-1 border-t border-[#1d1d1d] pb-0.5 pl-1">
      <span className="flex h-4 w-6 items-center bg-[#d0d0d0]">
        <svg width="16" height="14" viewBox="0 0 16 14"><path d="M4 2l4 5-4 5M9 12h6" fill="none" stroke="#000" strokeWidth="1.800" /></svg>
      </span>
      Command:
      <input aria-label="Command" className="min-w-0 flex-1 bg-transparent outline-none" />
    </label>
  </section>
);

const tutorials = ['Screen Layout', 'Project Integration', 'Use DWG Files', 'Sheets and Scale'];

const TutorialPanel = () => (
  <aside className="flex w-[287px] shrink-0 flex-col border-l border-black bg-[#2d2e2e]">
    <div className="flex h-[22px] shrink-0 items-center bg-[#1b1b1b] pb-0.5 pl-3.5 text-xs text-[#b8b8b8]">
      <h2>Tutorial</h2>
      <PinClose />
    </div>
    <div className="px-[11px] pt-2.5 font-['Noto_Sans',sans-serif] text-[#f2f2f2]">
      <h3 className="text-lg leading-6 font-bold">Essential Tutorials</h3>
      <p className="text-[13px] leading-5">Contents</p>
      <p className="mt-[23px] text-[13px] leading-[17px]">
        Is this the first time for ArchiDesign?<br />Easy to follow<br />with simple guides and examples.
      </p>
      <ol className="mt-[17px]">
        {tutorials.map((title, i) => (
          <li key={title} className="flex h-[49px] items-center">
            <span className="ml-[34px] w-5 text-center text-lg">{i + 1}</span>
            <a href="#" className="flex-1 pr-[26px] text-center text-base">{title}</a>
          </li>
        ))}
      </ol>
    </div>
  </aside>
);

const sideTools = ['swap', 'alert', 'dash', 'arrow', 'arrow', 'plus', 'dots', 'rotate', 'box', 'box', 'rotate', 'cross', 'round', 'plus', 'swap', 'round'];

const SideToolbar = () => (
  <div className="w-7 shrink-0 bg-[#1b1b1b]">
    <div className="flex flex-col items-center bg-[#262626] pt-[3px]">
      <svg width="18" height="4" viewBox="0 0 18 4"><path d="M0 0.500h18M0 2.500h18" stroke="#5a5a5a" strokeDasharray="1 1" /></svg>
      <div className="mt-[3px]">
        {sideTools.map((name, i) => (
          <ToolButton key={i} name={`locked-${name}`} />
        ))}
      </div>
      <button aria-label="More side tools" className="flex h-3 w-full items-center justify-end pr-1">
        <svg width="7" height="7" viewBox="0 0 7 7"><path d="M0.500 0v7" stroke={LIGHT} /><path d="M2 0l4 3.500L2 7z" fill={LIGHT} /></svg>
      </button>
    </div>
  </div>
);

const statusTools: { label: string; on?: boolean; art: React.ReactNode }[] = [
  { label: 'Import', on: true, art: <><path d="M4 12V2h12v8M7 2v6l3-2 3 2V2" /><path d="M2 15h6M4 13l-2 2 2 2M12 12h3a3 3 0 0 1 0 6h-2M14 10l-2 2 2 2" /></> },
  { label: 'Notice', on: true, art: <><path d="M3 2h6v11a3 3 0 0 1-6 0z" fill={LIGHT} stroke="none" /><circle cx="6" cy="13" r="1.500" fill="#4b4b4b" stroke="none" /><path d="M13 2h6v10h-6z" fill={LIGHT} stroke="none" /><path d="M16 4v4M16 9v1.500" stroke="#4b4b4b" /></> },
  { label: 'Info tag', on: true, art: <><path d="M7 1h6v3H7zM7 5h6v7a3 3 0 0 1-6 0z" fill={LIGHT} stroke="none" /><circle cx="10" cy="12" r="1.500" fill="#4b4b4b" stroke="none" /><path d="M2 19l4-3h10" /></> },
  { label: 'Cycle', on: true, art: <><rect x="2.500" y="2.500" width="15" height="16" strokeDasharray="2 1" /><path d="M5 12V6h9M12 4l2 2-2 2M15 9v6H6M8 13l-2 2 2 2" /></> },
  { label: 'Groups', art: <><rect x="1.500" y="1.500" width="17" height="18" strokeDasharray="2 1" /><path d="M4 4h5v5H4z" fill="#8c8c8c" /><path d="M12 4h5v5h-5zM4 12h5v5H4zM12 12h5v5h-5z" /></> },
  { label: 'Tag lock', on: true, art: <><path d="M3 2h6v11a3 3 0 0 1-6 0z" fill={LIGHT} stroke="none" /><PadLock x={11} y={9} /></> },
  { label: 'Snap', art: <><path d="M5 3v14M9 3v14M13 3v14M2 6h15M2 10h15M2 14h15" stroke="#a8a8a8" /><circle cx="14" cy="15" r="2" fill={LIGHT} stroke="none" /></> },
  { label: 'Grid', on: true, art: <path d="M5 3v15M9 3v15M13 3v15M17 3v15M3 5h15M3 9h15M3 13h15M3 17h15" strokeWidth="1.100" /> },
  { label: 'Ortho', on: true, art: <path d="M3 3v14.500h15M3 11.500h6v6" stroke="#b4b4b4" strokeWidth="1.600" /> },
  { label: 'Polar', art: <><circle cx="9" cy="11" r="7.500" fill="#a8a8a8" stroke="none" /><path d="M9 11L16 3v8z" fill="#262626" stroke={LIGHT} /></> },
  { label: 'Object snap', on: true, art: <><path d="M9 18H2.500V2.500h15V9M4 4h3v3H4zM7 7l6 6" /><path d="M13 19v-5a2.500 2.500 0 0 1 5 0v5" strokeWidth="2" /></> },
  { label: 'Snap track', on: true, art: <><rect x="2.500" y="2.500" width="15" height="16" /><path d="M7 10h6" /><circle cx="5.500" cy="10" r="1.500" /><circle cx="14" cy="10" r="2" /></> },
  { label: 'Weight', art: <path d="M3 5h14M3 11h14M3 17h14" strokeWidth="2.400" /> },
  { label: 'Measure', art: <path d="M1 7v7M19 7v7M1 10.500h5l2 2h4l2-2h5M6 8v4M14 8v4" strokeWidth="1.500" /> },
  { label: 'Clean screen', art: <><path d="M2 3h16" strokeWidth="3" /><path d="M9 18H2.500V3h15v7M11 13h8M12 14v5M15 10v9M18 14v5" /></> },
  { label: 'Lock screen', art: <><path d="M2 3h16" strokeWidth="3" /><path d="M9 18H2.500V3h15v7" /><path d="M11 14h8v6h-8z" fill="#fff" stroke="none" /><path d="M10 15v-3a2 2 0 0 1 4 0v2" /></> },
];

const StatusBar = () => (
  <footer className="flex h-6 shrink-0 items-end justify-end bg-[#262626] pr-[10px]">
    <span className="flex h-[21px] items-center pr-2 font-['Roboto',sans-serif] text-[11px] text-[#cfcfcf]">1414542.0895,767488.6811,0</span>
    {statusTools.map((tool) => (
      <button key={tool.label} aria-label={tool.label} className={`flex h-[21px] w-[26px] shrink-0 items-center justify-center ${tool.on ? 'bg-[#4b4b4b]' : ''}`}>
        <Icon>{tool.art}</Icon>
      </button>
    ))}
  </footer>
);

export default function App() {
  return (
    <div className="flex h-screen w-full flex-col overflow-hidden bg-[#1b1b1b] font-['Open_Sans',sans-serif]">
      <Header />
      <Toolbars />
      <div className="flex min-h-0 flex-1">
        <LibraryPanel />
        <main className="flex min-w-0 flex-1 flex-col border-l-2 border-black">
          <DrawingTabs />
          <Viewport />
          <LayoutTabs />
          <CommandPanel />
        </main>
        <TutorialPanel />
        <SideToolbar />
      </div>
      <StatusBar />
    </div>
  );
}
